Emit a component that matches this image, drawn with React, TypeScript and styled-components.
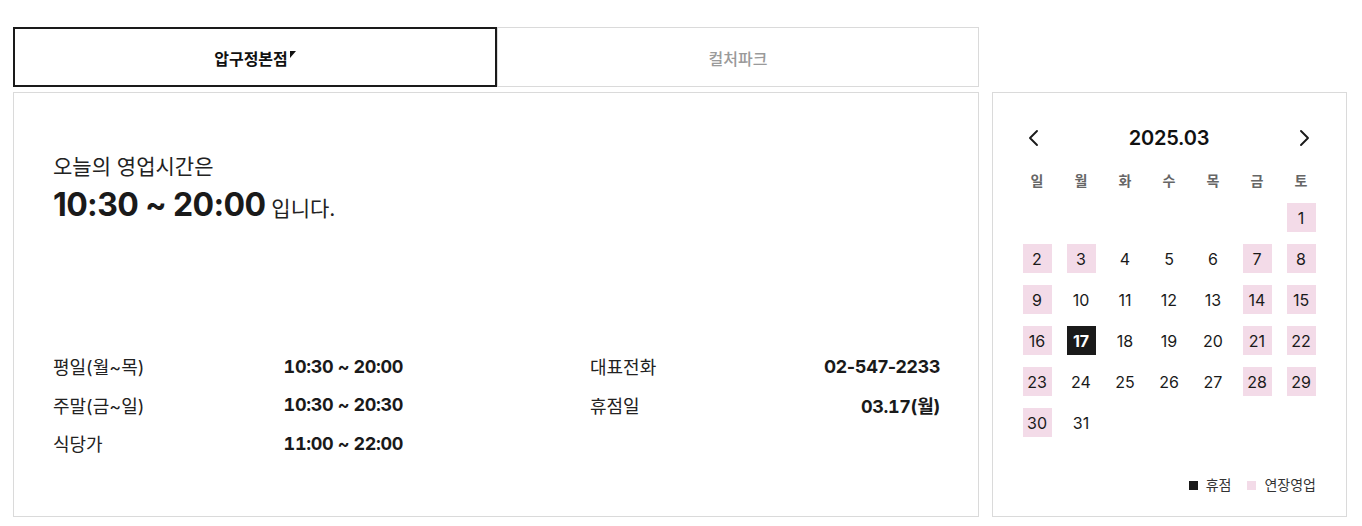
import styled, { createGlobalStyle } from 'styled-components';

const GlobalStyle = createGlobalStyle`
  * { box-sizing: border-box; }
  body {
    margin: 0;
    background: #fff;
    font-family: Inter, 'Noto Sans CJK KR', sans-serif;
    color: #1a1a1a;
  }
`;

type Mark = 'none' | 'extended' | 'closed';

const weekdays = ['일', '월', '화', '수', '목', '금', '토'];
const extended = [1, 2, 3, 7, 8, 9, 14, 15, 16, 21, 22, 23, 28, 29, 30];
const closedDay = 17;
const firstWeekday = 6;

const hours = [
  { label: '평일(월~목)', value: '10:30 ~ 20:00', tabular: true },
  { label: '주말(금~일)', value: '10:30 ~ 20:30', tabular: true },
  { label: '식당가', value: '11:00 ~ 22:00', tabular: true },
];

const info = [
  { label: '대표전화', value: '02-547-2233', tabular: false },
  { label: '휴점일', value: '03.17(월)', tabular: true },
];

const Chevron = ({ dir }: { dir: 'left' | 'right' }) => (
  <svg width="18" height="18" viewBox="0 0 18 18" fill="none">
    <path
      d={dir === 'left' ? 'M12 2 L5 9 L12 16' : 'M6 2 L13 9 L6 16'}
      stroke="#1a1a1a"
      strokeWidth="1.9"
      strokeLinecap="round"
      strokeLinejoin="round"
    />
  </svg>
);

const App = () => {
  const cells: (number | null)[] = [];
  for (let i = 0; i < firstWeekday; i++) cells.push(null);
  for (let d = 1; d <= 31; d++) cells.push(d);

  const markOf = (d: number): Mark =>
    d === closedDay ? 'closed' : extended.includes(d) ? 'extended' : 'none';

  return (
    <>
      <GlobalStyle />
      <Page>
        <Tabs>
          <Tab $active>압구정본점</Tab>
          <Tab>컬처파크</Tab>
        </Tabs>
        <Spacer />
        <InfoPanel>
          <Today>
            <p className="__lead">오늘의 영업시간은</p>
            <p className="__time">
              <strong>10:30 ~ 20:00</strong> 입니다.
            </p>
          </Today>
          <Details>
            <InfoColumn>
              {hours.map((h) => (
                <InfoRow key={h.label}>
                  <span>{h.label}</span>
                  <Value $tabular={h.tabular}>{h.value}</Value>
                </InfoRow>
              ))}
            </InfoColumn>
            <InfoColumn>
              {info.map((h) => (
                <InfoRow key={h.label}>
                  <span>{h.label}</span>
                  <Value $tabular={h.tabular}>{h.value}</Value>
                </InfoRow>
              ))}
            </InfoColumn>
          </Details>
        </InfoPanel>
        <Calendar>
          <CalHeader>
            <NavButton aria-label="이전 달">
              <Chevron dir="left" />
            </NavButton>
            <h4>2025.03</h4>
            <NavButton aria-label="다음 달">
              <Chevron dir="right" />
            </NavButton>
          </CalHeader>
          <DayGrid>
            {weekdays.map((w) => (
              <WeekLabel key={w}>{w}</WeekLabel>
            ))}
          </DayGrid>
          <DateGrid>
            {cells.map((d, i) => (
              <DateCell key={i}>{d && <DateBox $mark={markOf(d)}>{d}</DateBox>}</DateCell>
            ))}
          </DateGrid>
          <Legend>
            <LegendItem $color="#1a1a1a">휴점</LegendItem>
            <LegendItem $color="#f3dbe8">연장영업</LegendItem>
          </Legend>
        </Calendar>
      </Page>
    </>
  );
};

const Page = styled.main`
  display: grid;
  grid-template-columns: 966px 355px;
  grid-template-rows: 60px 425px;
  column-gap: 13px;
  row-gap: 5px;
  padding: 27px 0 0 13px;
`;

const Spacer = styled.div``;

const Tabs = styled.nav`
  display: flex;
`;

const Tab = styled.button<{ $active?: boolean }>`
  flex: 1;
  display: flex;
  align-items: center;
  justify-content: center;
  background: #fff;
  font-family: inherit;
  font-size: 16px;
  cursor: pointer;
  border: ${(p) => (p.$active ? '2px solid #1a1a1a' : '1px solid #dadada')};
  color: ${(p) => (p.$active ? '#111' : '#9a9a9a')};
  font-weight: ${(p) => (p.$active ? 700 : 500)};
  padding: 0;
  padding-top: 2px;
  &::after {
    content: '';
    display: ${(p) => (p.$active ? 'inline-block' : 'none')};
    align-self: flex-start;
    margin-top: 20px;
    margin-left: 2px;
    border-top: 7px solid #111;
    border-right: 6px solid transparent;
  }
`;

const InfoPanel = styled.section`
  display: flex;
  flex-direction: column;
  border: 1px solid #dadada;
  padding: 60px 38px 61px 39px;
`;

const Today = styled.div`
  p {
    margin: 0;
  }
  .__lead {
    font-size: 21px;
    line-height: 28px;
    color: #222;
  }
  .__time {
    margin-top: 4px;
    font-size: 21px;
    line-height: 40px;
    color: #222;
    strong {
      font-size: 32px;
      font-weight: 700;
      letter-spacing: -0.02em;
      color: #1a1a1a;
    }
  }
`;

const Details = styled.div`
  margin-top: auto;
  display: flex;
  justify-content: space-between;
  align-items: flex-start;
`;

const InfoColumn = styled.div`
  width: 350px;
  display: flex;
  flex-direction: column;
  gap: 14.5px;
`;

const InfoRow = styled.div`
  display: flex;
  justify-content: space-between;
  align-items: center;
  height: 24px;
  font-size: 18px;
  color: #222;
`;

const Value = styled.strong<{ $tabular: boolean }>`
  font-weight: 700;
  font-size: 18px;
  letter-spacing: -0.02em;
  font-variant-numeric: ${(p) => (p.$tabular ? 'tabular-nums' : 'normal')};
  color: #1a1a1a;
`;

const Calendar = styled.aside`
  display: flex;
  flex-direction: column;
  border: 1px solid #dadada;
  padding: 29px 22px 22px 22px;
`;

const CalHeader = styled.div`
  display: flex;
  justify-content: space-between;
  align-items: center;
  height: 32px;
  padding: 0 11px 0 10px;
  h4 {
    margin: 0;
    font-size: 20px;
    font-weight: 600;
    letter-spacing: -0.01em;
    color: #111;
  }
`;

const NavButton = styled.button`
  display: flex;
  border: none;
  background: none;
  padding: 0;
  cursor: pointer;
`;

const DayGrid = styled.div`
  display: grid;
  grid-template-columns: repeat(7, 44px);
  margin-top: 17px;
`;

const WeekLabel = styled.span`
  text-align: center;
  font-size: 14px;
  font-weight: 700;
  line-height: 20px;
  color: #666;
`;

const DateGrid = styled.div`
  display: grid;
  grid-template-columns: repeat(7, 44px);
  grid-auto-rows: 29px;
  row-gap: 12px;
  margin-top: 12px;
`;

const DateCell = styled.div`
  display: flex;
  justify-content: center;
`;

const DateBox = styled.span<{ $mark: Mark }>`
  width: 29px;
  height: 29px;
  display: flex;
  align-items: center;
  justify-content: center;
  font-size: 16px;
  background: ${(p) =>
    p.$mark === 'closed' ? '#1a1a1a' : p.$mark === 'extended' ? '#f3dbe8' : 'transparent'};
  color: ${(p) => (p.$mark === 'closed' ? '#fff' : '#1a1a1a')};
  font-weight: ${(p) => (p.$mark === 'closed' ? 700 : 400)};
`;

const Legend = styled.div`
  margin-top: auto;
  display: flex;
  justify-content: flex-end;
  gap: 16px;
  padding-right: 8px;
`;

const LegendItem = styled.span<{ $color: string }>`
  display: flex;
  align-items: center;
  gap: 8px;
  font-size: 14px;
  color: #333;
  line-height: 18px;
  &::before {
    content: '';
    width: 9px;
    height: 9px;
    background: ${(p) => p.$color};
  }
`;

export default App;
